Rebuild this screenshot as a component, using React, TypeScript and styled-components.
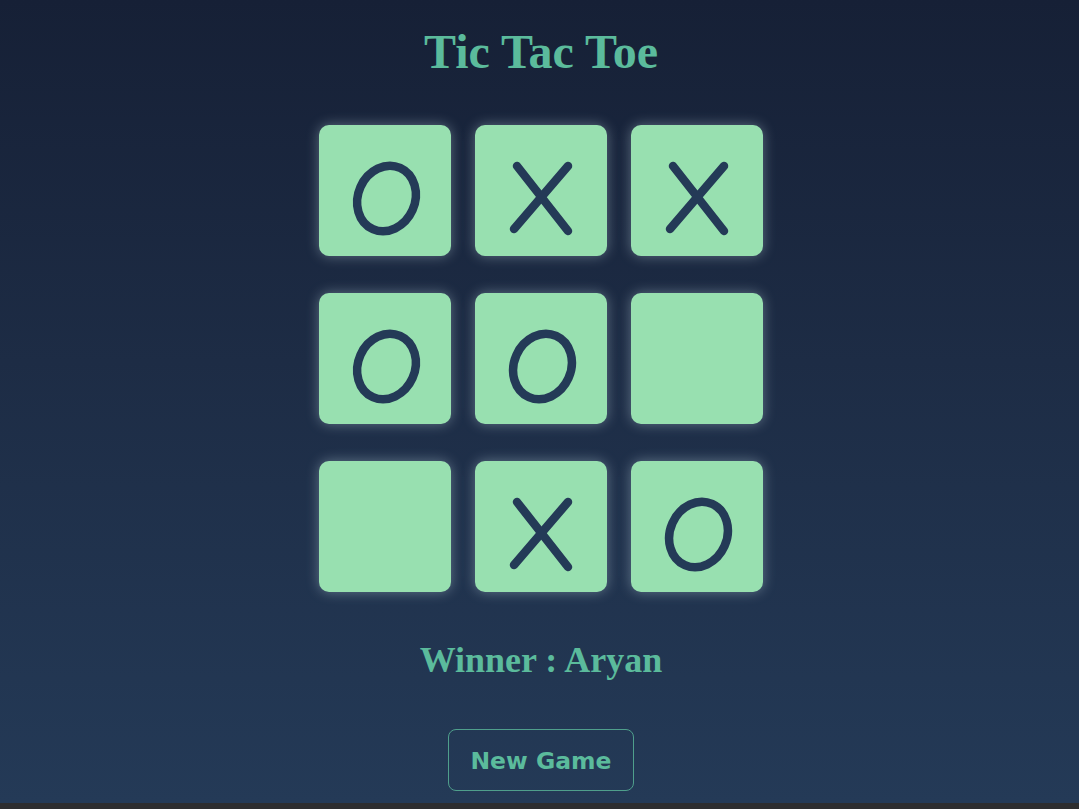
import React from "react";
import styled, { createGlobalStyle } from "styled-components";

const GlobalStyle = createGlobalStyle`
  html, body {
    margin: 0;
    padding: 0;
    background: #2d2d2f;
  }
  #root {
    display: block;
  }
`;

const Page = styled.main`
  display: flex;
  flex-direction: column;
  align-items: center;
  padding: 25px 0 12px 3px;
  background: linear-gradient(180deg, #162036 0%, #1d2c45 45%, #243a57 100%);
`;

const Title = styled.h1`
  margin: 0 0 47px;
  font-family: "Liberation Serif", "Times New Roman", serif;
  font-weight: 700;
  font-size: 48px;
  line-height: 53px;
  color: #5bbb9c;
`;

const Board = styled.div`
  display: grid;
  grid-template-columns: repeat(3, 132px);
  grid-auto-rows: 131px;
  column-gap: 24px;
  row-gap: 37px;
`;

const Cell = styled.button`
  display: block;
  width: 132px;
  height: 131px;
  padding: 0;
  border: none;
  border-radius: 10px;
  background: #98e0b0;
  box-shadow: 0 0 13px rgba(190, 215, 225, 0.42);
  cursor: pointer;
`;

const Mark = styled.svg`
  display: block;
  width: 132px;
  height: 131px;
`;

const Status = styled.h2`
  margin: 48px 0 49px;
  font-family: "Liberation Serif", "Times New Roman", serif;
  font-weight: 700;
  font-size: 36px;
  line-height: 40px;
  color: #5bbb9c;
`;

const NewGame = styled.button`
  width: 186px;
  height: 62px;
  border: 1px solid #4f9f8c;
  border-radius: 8px;
  background: transparent;
  color: #5bbb9c;
  font-family: "DejaVu Sans", Verdana, sans-serif;
  font-weight: 700;
  font-size: 23.5px;
  padding: 2px 0 0;
  cursor: pointer;
`;

type Value = "X" | "O" | null;

const board: Value[] = ["O", "X", "X", "O", "O", null, null, "X", "O"];

const MarkIcon: React.FC<{ value: Value }> = ({ value }) => {
  if (!value) return null;
  return (
    <Mark viewBox="0 0 132 131" aria-label={value} role="img">
      {value === "X" ? (
        <g stroke="#243a57" strokeWidth={8.5} strokeLinecap="round" fill="none">
          <line x1={42} y1={41} x2={93} y2={106} />
          <line x1={93} y1={41} x2={39} y2={104} />
        </g>
      ) : (
        <ellipse
          cx={67.5}
          cy={73.5}
          rx={28.5}
          ry={33.5}
          transform="rotate(24 67.5 73.5)"
          stroke="#243a57"
          strokeWidth={8.5}
          fill="none"
        />
      )}
    </Mark>
  );
};

export default function App() {
  return (
    <>
      <GlobalStyle />
      <Page>
        <Title>Tic Tac Toe</Title>
        <Board>
          {board.map((v, i) => (
            <Cell key={i} aria-label={v ?? "empty"}>
              <MarkIcon value={v} />
            </Cell>
          ))}
        </Board>
        <Status>Winner : Aryan</Status>
        <NewGame>New Game</NewGame>
      </Page>
    </>
  );
}
